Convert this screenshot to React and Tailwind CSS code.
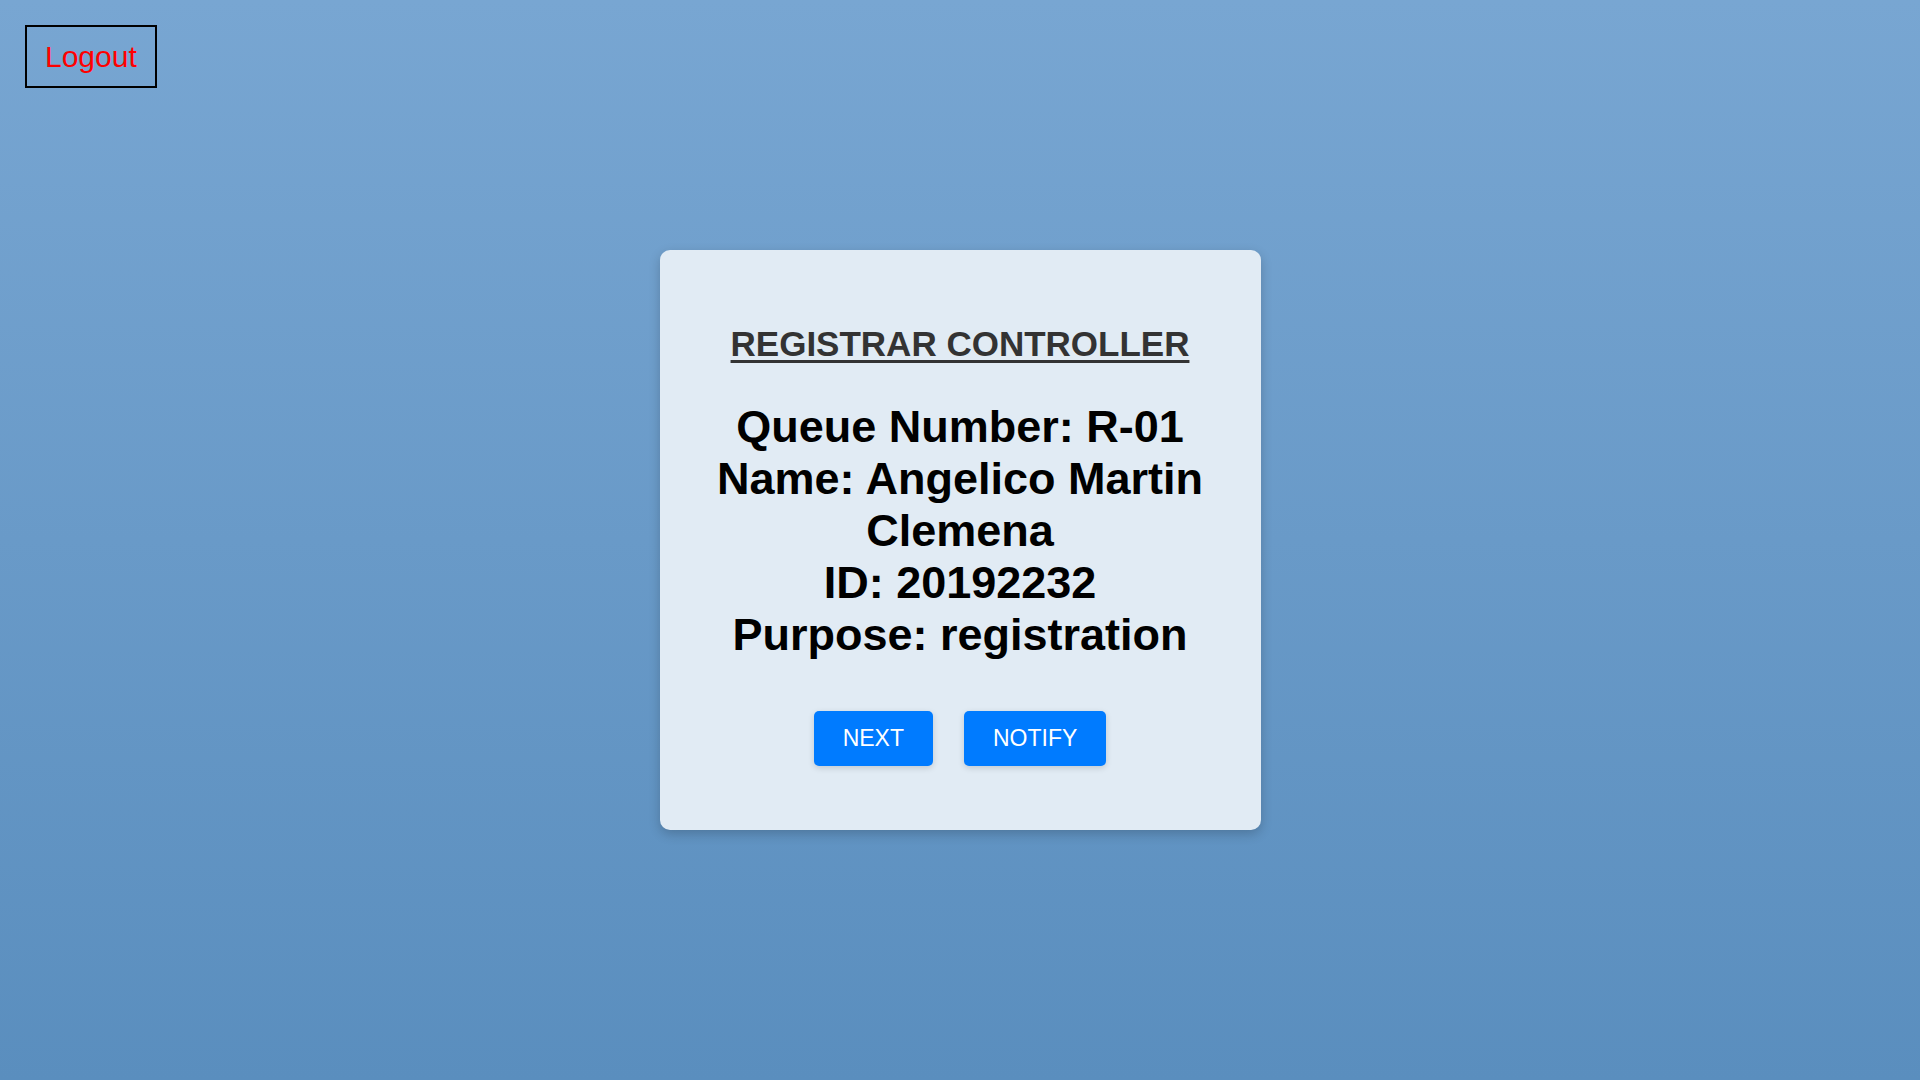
import React from "react";

function App() {
  const info = [
    "Queue Number: R-01",
    "Name: Angelico Martin Clemena",
    "ID: 20192232",
    "Purpose: registration",
  ];

  return (
    <div
      className="w-full h-screen flex flex-col bg-gradient-to-b from-[#78a6d2] to-[#5a8ebe] font-['Liberation_Sans',Arial,sans-serif] relative"
    >
      <div className="pt-[25px] pl-[25px]">
        <button className="border-2 border-black text-[#ff0000] text-[30px] leading-[35px] px-[18px] py-[12px]">
          Logout
        </button>
      </div>

      <div className="absolute inset-0 flex items-center justify-center pointer-events-none">
        <div className="pointer-events-auto w-[601px] bg-[#e1ebf4] rounded-[10px] shadow-[0_4px_12px_rgba(0,0,0,0.2)] px-[40px] pt-[74px] pb-[64px] flex flex-col items-center">
          <h2 className="text-[35px] leading-[40px] font-bold text-[#333] underline underline-offset-[4px] decoration-[3px] text-center">
            REGISTRAR CONTROLLER
          </h2>
          <div className="mt-[37px] text-[45px] leading-[52px] font-bold text-black text-center">
            {info.map((line) => (
              <div key={line}>{line}</div>
            ))}
          </div>
          <div className="mt-[50px] flex gap-[31px]">
            <button className="bg-[#007bff] text-white text-[23px] leading-[25px] px-[29px] py-[15px] rounded-[5px] shadow-[0_2px_6px_rgba(0,0,0,0.15)]">
              NEXT
            </button>
            <button className="bg-[#007bff] text-white text-[23px] leading-[25px] px-[29px] py-[15px] rounded-[5px] shadow-[0_2px_6px_rgba(0,0,0,0.15)]">
              NOTIFY
            </button>
          </div>
        </div>
      </div>
    </div>
  );
}

export default App;
